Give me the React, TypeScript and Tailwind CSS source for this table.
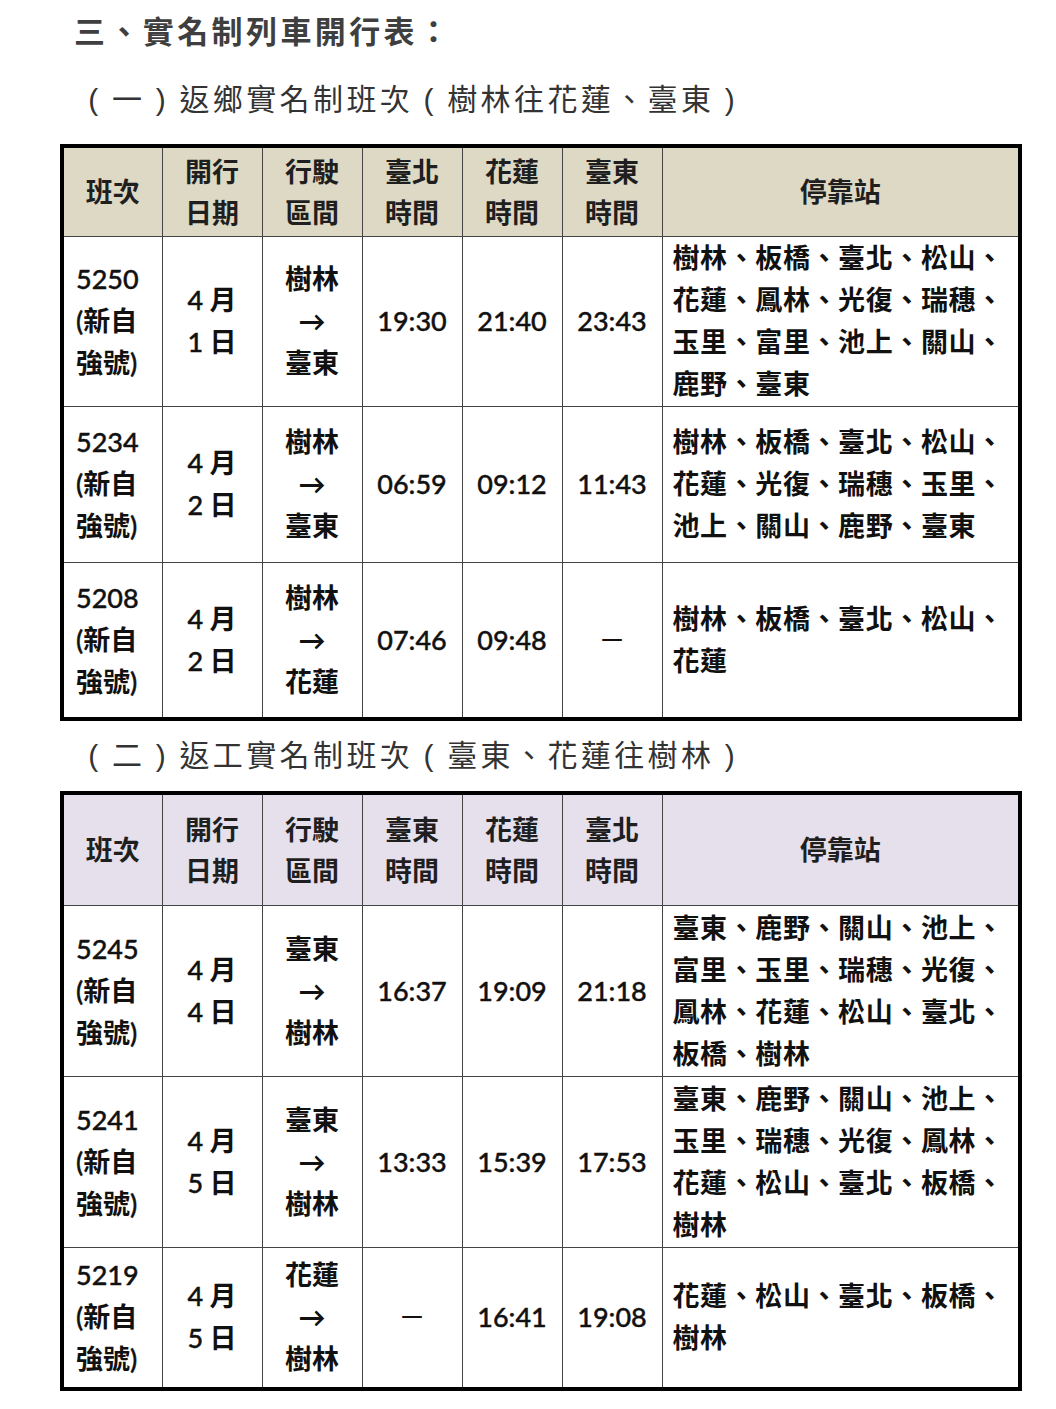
const FONT = "font-['Lato','Noto_Sans_CJK_TC',sans-serif]";

type Row = {
  no: string;
  month: string;
  day: string;
  from: string;
  to: string;
  t1: string;
  t2: string;
  t3: string;
  stops: string[];
  h: string;
};

const DASH = "－";

const table1: Row[] = [
  {
    no: "5250",
    month: "4",
    day: "1",
    from: "樹林",
    to: "臺東",
    t1: "19:30",
    t2: "21:40",
    t3: "23:43",
    stops: ["樹林、板橋、臺北、松山、", "花蓮、鳳林、光復、瑞穗、", "玉里、富里、池上、關山、", "鹿野、臺東"],
    h: "h-[170px]",
  },
  {
    no: "5234",
    month: "4",
    day: "2",
    from: "樹林",
    to: "臺東",
    t1: "06:59",
    t2: "09:12",
    t3: "11:43",
    stops: ["樹林、板橋、臺北、松山、", "花蓮、光復、瑞穗、玉里、", "池上、關山、鹿野、臺東"],
    h: "h-[156px]",
  },
  {
    no: "5208",
    month: "4",
    day: "2",
    from: "樹林",
    to: "花蓮",
    t1: "07:46",
    t2: "09:48",
    t3: DASH,
    stops: ["樹林、板橋、臺北、松山、", "花蓮"],
    h: "h-[157px]",
  },
];

const table2: Row[] = [
  {
    no: "5245",
    month: "4",
    day: "4",
    from: "臺東",
    to: "樹林",
    t1: "16:37",
    t2: "19:09",
    t3: "21:18",
    stops: ["臺東、鹿野、關山、池上、", "富里、玉里、瑞穗、光復、", "鳳林、花蓮、松山、臺北、", "板橋、樹林"],
    h: "h-[171px]",
  },
  {
    no: "5241",
    month: "4",
    day: "5",
    from: "臺東",
    to: "樹林",
    t1: "13:33",
    t2: "15:39",
    t3: "17:53",
    stops: ["臺東、鹿野、關山、池上、", "玉里、瑞穗、光復、鳳林、", "花蓮、松山、臺北、板橋、", "樹林"],
    h: "h-[171px]",
  },
  {
    no: "5219",
    month: "4",
    day: "5",
    from: "花蓮",
    to: "樹林",
    t1: DASH,
    t2: "16:41",
    t3: "19:08",
    stops: ["花蓮、松山、臺北、板橋、", "樹林"],
    h: "h-[142px]",
  },
];

// half-width paren centred in a full-width box, as in the original document
function P({ c }: { c: string }) {
  return <span className="inline-block w-[34px] text-center font-['Liberation_Sans',sans-serif]">{c}</span>;
}

function Schedule({
  rows,
  cols,
  headBg,
  headH,
}: {
  rows: Row[];
  cols: [string, string, string];
  headBg: string;
  headH: string;
}) {
  const th = `border border-[#444] ${headBg} font-bold text-[#1f1f1f] text-center align-middle leading-[41px]`;
  const td = "border border-[#444] align-middle text-[#111] font-bold leading-[42px]";
  const num = "font-['Lato',sans-serif] font-medium text-[27px] [-webkit-text-stroke:0.4px_#111]";
  return (
    <table className="ml-[60px] w-[962px] table-fixed border-collapse border-[4px] border-black text-[27px]">
      <colgroup>
        <col className="w-[100px]" />
        <col className="w-[100px]" />
        <col className="w-[100px]" />
        <col className="w-[100px]" />
        <col className="w-[100px]" />
        <col className="w-[100px]" />
        <col />
      </colgroup>
      <thead>
        <tr className={headH}>
          <th className={th}>班次</th>
          <th className={th}>
            開行
            <br />
            日期
          </th>
          <th className={th}>
            行駛
            <br />
            區間
          </th>
          {cols.map((c) => (
            <th key={c} className={th}>
              {c}
              <br />
              時間
            </th>
          ))}
          <th className={th}>停靠站</th>
        </tr>
      </thead>
      <tbody>
        {rows.map((r) => (
          <tr key={r.no} className={r.h}>
            <td className={`${td} pl-[12px]`}>
              <span className={num}>{r.no}</span>
              <br />
              <span className={num}>(</span>新自
              <br />
              強號<span className={num}>)</span>
            </td>
            <td className={`${td} text-center`}>
              <span className={num}>{r.month}</span> 月
              <br />
              <span className={num}>{r.day}</span> 日
            </td>
            <td className={`${td} text-center`}>
              {r.from}
              <br />→<br />
              {r.to}
            </td>
            {[r.t1, r.t2, r.t3].map((t, i) => (
              <td key={i} className={`${td} text-center`}>
                {t === DASH ? <span className="font-normal">{t}</span> : <span className={num}>{t}</span>}
              </td>
            ))}
            <td className={`${td} pl-[10px] tracking-[0.6px]`}>
              {r.stops.map((s, i) => (
                <div key={i} className="whitespace-nowrap">
                  {s}
                </div>
              ))}
            </td>
          </tr>
        ))}
      </tbody>
    </table>
  );
}

export default function App() {
  return (
    <div className={`w-[1056px] min-h-[1409px] bg-white ${FONT}`}>
      <h1 className="pl-[74px] pt-[10px] text-[31px] leading-[42px] font-bold tracking-[3.4px] text-[#3f3f3f]">
        三、實名制列車開行表：
      </h1>
      <h2 className="pl-[78px] pt-[26px] text-[30px] leading-[40px] font-normal tracking-[3.4px] text-[#333]">
        <P c="(" />一<P c=")" />返鄉實名制班次<P c="(" />樹林往花蓮、臺東<P c=")" />
      </h2>
      <div className="pt-[24px]">
        <Schedule rows={table1} cols={["臺北", "花蓮", "臺東"]} headBg="bg-[#ddd9c4]" headH="h-[90px]" />
      </div>
      <h2 className="pl-[78px] pt-[13px] text-[30px] leading-[40px] font-normal tracking-[3.4px] text-[#333]">
        <P c="(" />二<P c=")" />返工實名制班次<P c="(" />臺東、花蓮往樹林<P c=")" />
      </h2>
      <div className="pt-[15px]">
        <Schedule rows={table2} cols={["臺東", "花蓮", "臺北"]} headBg="bg-[#e5e0ec]" headH="h-[112px]" />
      </div>
    </div>
  );
}
